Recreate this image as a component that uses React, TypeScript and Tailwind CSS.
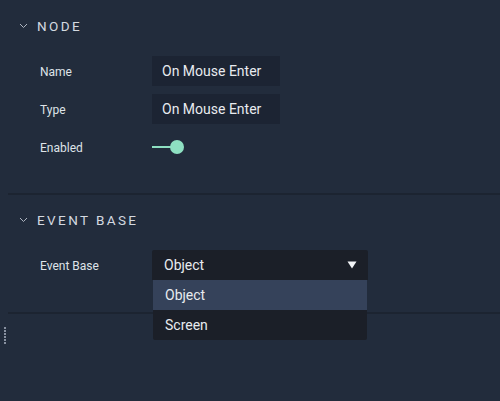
import React from "react";

function Chevron() {
  return (
    <svg width="9" height="6" viewBox="0 0 9 6" className="mr-[9px] shrink-0">
      <path d="M1 1 L4.5 4.5 L8 1" fill="none" stroke="#aeb5c0" strokeWidth="1" />
    </svg>
  );
}

function Header({ title }: { title: string }) {
  return (
    <div className="flex items-center pl-[19px] h-[18px]">
      <Chevron />
      <span className="text-[13.5px] leading-[18px] tracking-[2.4px] text-[#d4d9e0]">{title}</span>
    </div>
  );
}

function Row({ label, children }: { label: string; children: React.ReactNode }) {
  return (
    <div className="flex items-center h-[30px]">
      <div className="w-[152px] shrink-0 pl-[40px] pt-[1px] text-[12px] text-[#dfe3e8]">{label}</div>
      {children}
    </div>
  );
}

export default function App() {
  return (
    <div
      className="relative w-[500px] h-[401px] bg-[#222c3c] overflow-hidden"
      style={{ fontFamily: "Roboto, 'Noto Sans', sans-serif" }}
    >
      <div className="pt-[17px]">
        <Header title="NODE" />
        <div className="mt-[21px] flex flex-col gap-[8px]">
          <Row label="Name">
            <div className="w-[128px] h-[30px] bg-[#1c2433] flex items-center pl-[10px] text-[14px] text-[#e8ebef]">
              On Mouse Enter
            </div>
          </Row>
          <Row label="Type">
            <div className="w-[128px] h-[30px] bg-[#1c2433] flex items-center pl-[10px] text-[14px] text-[#e8ebef]">
              On Mouse Enter
            </div>
          </Row>
          <Row label="Enabled">
            <div className="relative w-[40px] h-[16px] flex items-center">
              <div className="w-[20px] h-[2px] bg-[#8ee0c2]" />
              <div className="w-[14px] h-[14px] rounded-full bg-[#8ee0c2] -ml-[2px]" />
            </div>
          </Row>
        </div>
        <div className="mt-[31px] ml-[8px] h-[2px] bg-[#1c2431]" />
      </div>

      <div className="pt-[16px]">
        <Header title="EVENT BASE" />
        <div className="mt-[21px]">
          <Row label="Event Base">
            <div className="relative w-[216px] h-[30px] bg-[#1b1f28] rounded-t-[2px] flex items-center pl-[12px] text-[14px] text-[#e8ebef]">
              Object
              <svg width="10" height="8" viewBox="0 0 10 8" className="absolute right-[11px] top-[11px]">
                <path d="M0.5 0.5 L9.5 0.5 L5 7.5 Z" fill="#f2f4f7" />
              </svg>
              <div className="absolute left-[1px] top-[30px] w-[214px] bg-[#1b1f28] rounded-b-[2px] z-10">
                <div className="h-[30px] bg-[#35425a] flex items-center pl-[12px] text-[14px] text-[#e8ebef]">
                  Object
                </div>
                <div className="h-[30px] flex items-center pl-[12px] text-[14px] text-[#e8ebef]">
                  Screen
                </div>
              </div>
            </div>
          </Row>
        </div>
        <div className="mt-[32px] ml-[8px] h-[2px] bg-[#1c2431]" />
      </div>

      <div className="absolute left-[4px] top-[327px] flex flex-col gap-[1px]">
        {[0, 1, 2, 3, 4, 5].map((i) => (
          <div key={i} className="w-[2px] h-[2px] bg-[#8891a0]" />
        ))}
      </div>
    </div>
  );
}
